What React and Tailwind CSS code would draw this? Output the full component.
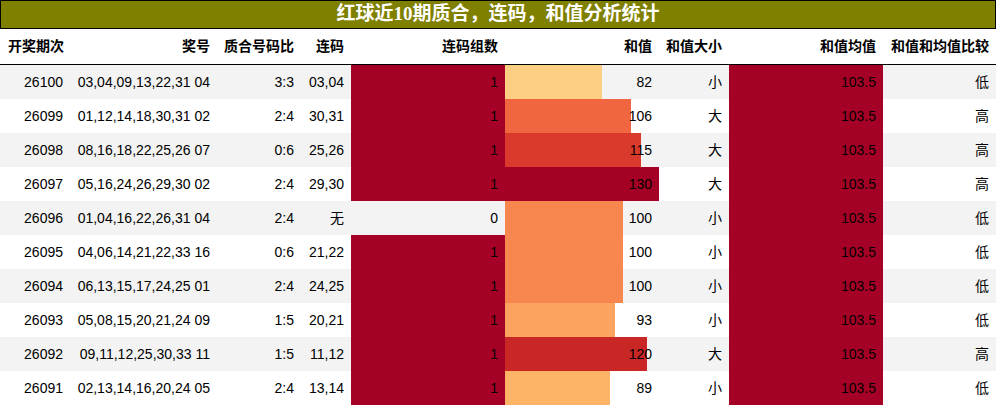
import React from "react";

const rows = [
  ["26100", "03,04,09,13,22,31 04", "3:3", "03,04", 1, 82, "小", "低", "#fdcf83"],
  ["26099", "01,12,14,18,30,31 02", "2:4", "30,31", 1, 106, "大", "高", "#f06641"],
  ["26098", "08,16,18,22,25,26 07", "0:6", "25,26", 1, 115, "大", "高", "#da3a2c"],
  ["26097", "05,16,24,26,29,30 02", "2:4", "29,30", 1, 130, "大", "高", "#a50026"],
  ["26096", "01,04,16,22,26,31 04", "2:4", "无", 0, 100, "小", "低", "#f7864f"],
  ["26095", "04,06,14,21,22,33 16", "0:6", "21,22", 1, 100, "小", "低", "#f7864f"],
  ["26094", "06,13,15,17,24,25 01", "2:4", "24,25", 1, 100, "小", "低", "#f7864f"],
  ["26093", "05,08,15,20,21,24 09", "1:5", "20,21", 1, 93, "小", "低", "#fba35f"],
  ["26092", "09,11,12,25,30,33 11", "1:5", "11,12", 1, 120, "大", "高", "#c92726"],
  ["26091", "02,13,14,16,20,24 05", "2:4", "13,14", 1, 89, "小", "低", "#fdb467"],
];

const headers = ["开奖期次", "奖号", "质合号码比", "连码", "连码组数", "和值", "和值大小", "和值均值", "和值和均值比较"];

function bar(pct, color) {
  return { backgroundImage: `linear-gradient(to right, ${color} ${pct}%, transparent ${pct}%)` };
}

export default function App() {
  const cell = "flex items-center justify-end pr-[7px] whitespace-nowrap";
  return (
    <div className="w-[996px] h-[406px] bg-white text-black" style={{ fontFamily: '"Liberation Sans", "Noto Sans CJK SC", sans-serif' }}>
      <div className="h-[29px] bg-[#808000] border border-black flex items-center justify-center text-white font-bold text-[19px]" style={{ fontFamily: '"Liberation Serif", "Noto Sans CJK SC", serif' }}>
        红球近10期质合，连码，和值分析统计
      </div>
      <div className="grid grid-cols-[70px_147px_84px_50px_154px_154px_70px_154px_113px]">
        {headers.map((h, i) => (
          <div key={h} className={`${cell} h-[36px] border-b border-black font-bold text-[14px] ${i === 0 ? "justify-start pl-[8px]" : ""}`}>
            {h}
          </div>
        ))}
        {rows.map((r, idx) => {
          const bg = idx % 2 === 0 ? "bg-[#f3f3f3]" : "bg-white";
          const c = `${cell} h-[34px] text-[14px] ${bg}`;
          return (
            <React.Fragment key={r[0]}>
              <div className={c}>{r[0]}</div>
              <div className={c}>{r[1]}</div>
              <div className={c}>{r[2]}</div>
              <div className={c}>{r[3]}</div>
              <div className={c} style={bar(r[4] ? 100 : 0, "#a50026")}>{r[4]}</div>
              <div className={c} style={bar((r[5] / 130) * 100, r[8])}>{r[5]}</div>
              <div className={c}>{r[6]}</div>
              <div className={c} style={bar(100, "#a50026")}>103.5</div>
              <div className={c}>{r[7]}</div>
            </React.Fragment>
          );
        })}
      </div>
    </div>
  );
}
